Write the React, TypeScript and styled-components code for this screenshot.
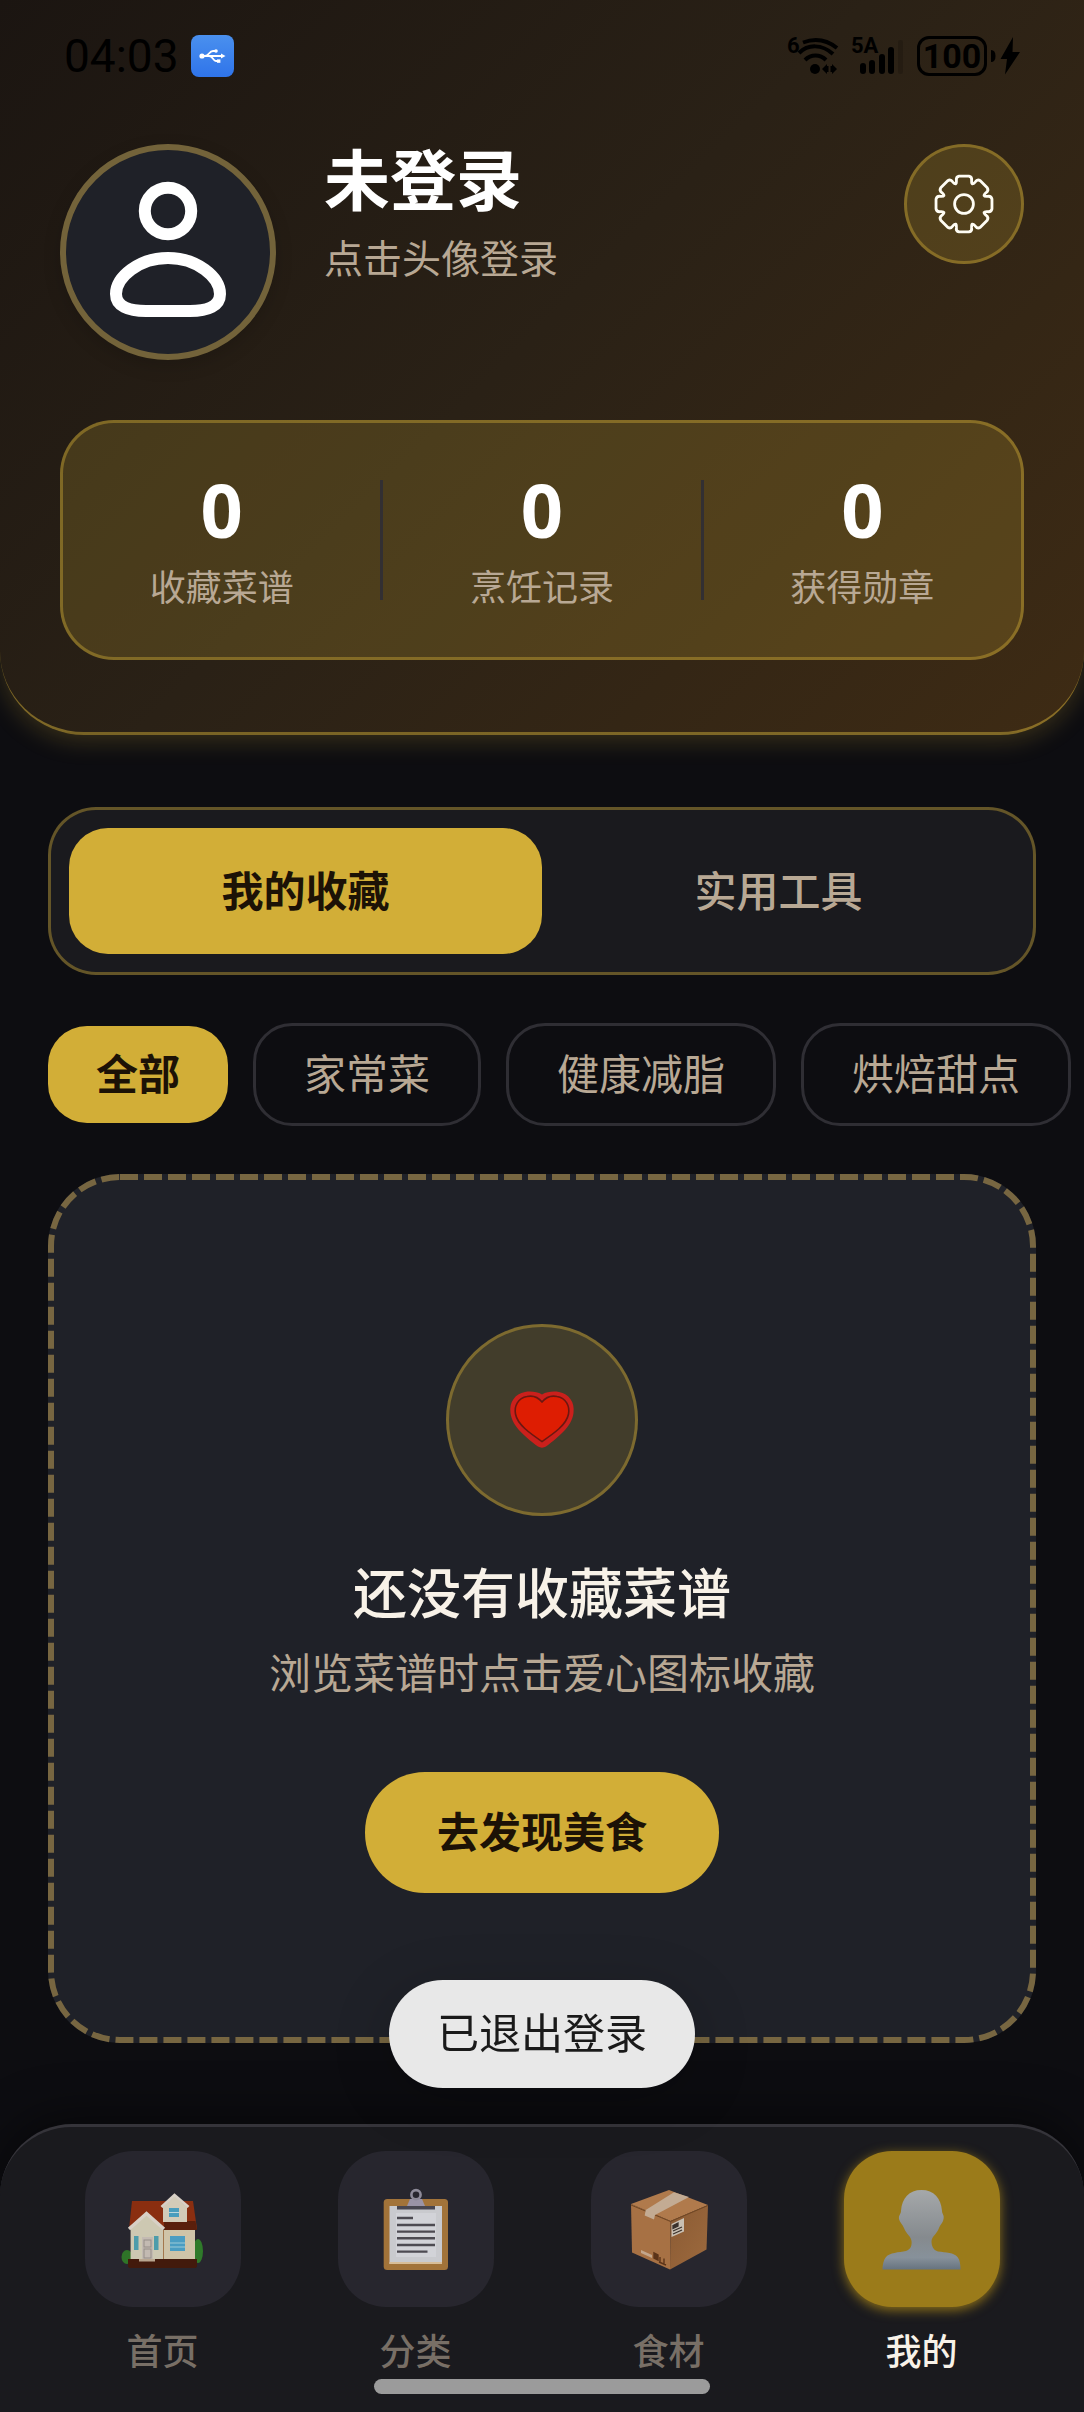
import React, { useState } from 'react';
import styled, { createGlobalStyle, css } from 'styled-components';

const color = {
  page: '#0d0d11',
  surface: '#1a1a1e',
  card: '#1f2128',
  tile: '#27262e',
  line: '#2f2e34',
  gold: '#d2ae37',
  goldDim: '#9b7b1a',
  goldWash: 'rgba(212, 175, 55, 0.2)',
  goldLine: 'rgba(212, 175, 55, 0.4)',
  text: '#ffffff',
  textWarm: '#f8f2e8',
  textSoft: '#b8a894',
  textFaint: '#786f66',
  ink: '#1c1206',
};

const GlobalStyle = createGlobalStyle`
  *, *::before, *::after { box-sizing: border-box; }
  body {
    margin: 0;
    background: ${color.page};
    color: ${color.text};
    font-family: "Noto Sans CJK SC", "Noto Sans", sans-serif;
  }
  h1, h2, p, dl, dd { margin: 0; }
  button { font: inherit; border: 0; padding: 0; cursor: pointer; }
`;

const Page = styled.div`
  display: flex;
  flex-direction: column;
  min-height: 100vh;
`;

/* ---------- header ---------- */

const Header = styled.header`
  padding: 0 60px 72px;
  border-bottom: 3px solid rgba(212, 175, 55, 0.5);
  border-radius: 0 0 84px 84px;
  background: linear-gradient(135deg, #1b1511 0%, #2a2116 48%, #3e2b14 100%);
  box-shadow: 0 6px 24px rgba(212, 175, 55, 0.22);
`;

const StatusBar = styled.div`
  display: flex;
  align-items: center;
  justify-content: space-between;
  height: 112px;
  margin-bottom: 32px;
  padding: 0 4px;
  color: #000;
  font-family: Roboto, "Noto Sans", sans-serif;
`;

const StatusGroup = styled.div<{ $gap: number }>`
  display: flex;
  align-items: center;
  gap: ${(p) => p.$gap}px;
`;

const Clock = styled.time`
  font-size: 46px;
  font-weight: 400;
  line-height: 48px;
`;

const Signal = styled.span<{ $width: number }>`
  position: relative;
  display: block;
  width: ${(p) => p.$width}px;
  height: 42px;

  svg { display: block; }
`;

const SignalTag = styled.span`
  position: absolute;
  top: 0;
  left: 0;
  font-size: 22px;
  font-weight: 700;
  line-height: 22px;
`;

const Battery = styled.span`
  display: grid;
  place-items: center;
  width: 70px;
  height: 40px;
  border: 3px solid #000;
  border-radius: 12px;
  font-size: 34px;
  font-weight: 700;
  line-height: 34px;
`;

const Profile = styled.section`
  display: flex;
  align-items: flex-start;
  gap: 48px;
`;

const Avatar = styled.button`
  flex: none;
  width: 216px;
  height: 216px;
  border: 6px solid #73633a;
  border-radius: 50%;
  background: ${color.card};
  box-shadow: 0 6px 18px rgba(0, 0, 0, 0.15);

  svg { display: block; }
`;

const Identity = styled.div`
  flex: 1;
  display: flex;
  flex-direction: column;
  gap: 24px;
`;

const Name = styled.h1`
  font-size: 66px;
  font-weight: 700;
  line-height: 64px;
`;

const Hint = styled.p`
  color: ${color.textSoft};
  font-size: 39px;
  line-height: 48px;
`;

const SettingsButton = styled.button`
  display: grid;
  place-items: center;
  flex: none;
  width: 120px;
  height: 120px;
  border: 3px solid ${color.goldLine};
  border-radius: 50%;
  background: ${color.goldWash};
`;

const Stats = styled.dl`
  display: flex;
  align-items: center;
  margin-top: 60px;
  padding: 48px 0;
  border: 3px solid ${color.goldLine};
  border-radius: 54px;
  background: ${color.goldWash};
`;

const Stat = styled.div`
  flex: 1;
  display: flex;
  flex-direction: column-reverse;
  align-items: center;
  gap: 12px;
`;

const StatLabel = styled.dt`
  color: ${color.textSoft};
  font-size: 36px;
  line-height: 48px;
`;

const StatValue = styled.dd`
  font-family: "Noto Sans", sans-serif;
  font-size: 74px;
  font-weight: 700;
  line-height: 78px;
`;

const StatDivider = styled.div`
  width: 3px;
  height: 120px;
  background: #322f32;
`;

/* ---------- content ---------- */

const Content = styled.main`
  flex: 1;
  display: flex;
  flex-direction: column;
  gap: 48px;
  padding: 72px 48px 81px;
`;

const Tabs = styled.div`
  display: flex;
  padding: 18px;
  border: 3px solid ${color.goldLine};
  border-radius: 48px;
  background: ${color.surface};
`;

const Tab = styled.button<{ $active: boolean }>`
  flex: 1;
  height: 126px;
  padding-bottom: 6px;
  border-radius: 39px;
  background: ${(p) => (p.$active ? color.gold : 'transparent')};
  color: ${(p) => (p.$active ? color.ink : color.textSoft)};
  font-size: 42px;
  font-weight: ${(p) => (p.$active ? 700 : 500)};
  line-height: 49px;
`;

const Chips = styled.div`
  display: flex;
  align-items: center;
  gap: 25px;
  margin-right: -48px;
  overflow-x: auto;
  scrollbar-width: none;
`;

const Chip = styled.button<{ $active: boolean }>`
  flex: none;
  padding: 21px 48px 27px;
  border-radius: 39px;
  font-size: 42px;
  line-height: 49px;
  ${(p) =>
    p.$active
      ? css`
          background: ${color.gold};
          color: ${color.ink};
          font-weight: 700;
        `
      : css`
          border: 3px solid ${color.line};
          background: transparent;
          color: ${color.textSoft};
        `}
`;

const EmptyCard = styled.section`
  position: relative;
  display: flex;
  flex-direction: column;
  align-items: center;
  padding: 150px 48px;
  border-radius: 72px;
  background: ${color.card};
  text-align: center;
`;

const DashedOutline = styled.svg`
  position: absolute;
  inset: 0;
  width: 100%;
  height: 100%;
  pointer-events: none;

  rect {
    x: 3px;
    y: 3px;
    width: calc(100% - 6px);
    height: calc(100% - 6px);
    fill: none;
    stroke: #776641;
    stroke-width: 6px;
    stroke-dasharray: 18 6;
  }
`;

const HeartBadge = styled.div`
  display: grid;
  place-items: center;
  width: 192px;
  height: 192px;
  border: 3px solid ${color.goldLine};
  border-radius: 50%;
  background: ${color.goldWash};
`;

const EmptyTitle = styled.h2`
  margin-top: 42px;
  color: ${color.textWarm};
  font-size: 54px;
  font-weight: 500;
  line-height: 66px;
`;

const EmptyText = styled.p`
  margin-top: 22px;
  color: ${color.textSoft};
  font-size: 42px;
  line-height: 49px;
`;

const PrimaryButton = styled.button`
  margin-top: 77px;
  padding: 33px 72px 39px;
  border-radius: 60px;
  background: ${color.gold};
  color: ${color.ink};
  font-size: 42px;
  font-weight: 700;
  line-height: 49px;
`;

/* ---------- overlays and navigation ---------- */

const ToastLayer = styled.div`
  position: fixed;
  right: 0;
  bottom: 324px;
  left: 0;
  z-index: 2;
  display: flex;
  justify-content: center;
  pointer-events: none;
`;

const Toast = styled.div`
  padding: 27px 48px 33px;
  border-radius: 54px;
  background: #e8e8e8;
  box-shadow: 0 12px 60px rgba(0, 0, 0, 0.2);
  color: #1a1a1a;
  font-size: 42px;
  line-height: 48px;
`;

const BottomBar = styled.footer`
  position: sticky;
  bottom: 0;
  display: flex;
  flex-direction: column;
  align-items: center;
  padding-bottom: 18px;
  border-top: 3px solid #35343a;
  border-radius: 72px 72px 0 0;
  background: ${color.surface};
  box-shadow: 0 -6px 48px rgba(0, 0, 0, 0.5);
`;

const Nav = styled.nav`
  display: flex;
  align-self: stretch;
  padding: 24px 36px 0;
`;

const NavLink = styled.a<{ $active: boolean }>`
  flex: 1;
  display: flex;
  flex-direction: column;
  align-items: center;
  gap: 18px;
  color: ${(p) => (p.$active ? color.textWarm : color.textFaint)};
  font-size: 36px;
  font-weight: 500;
  line-height: 48px;
  text-decoration: none;
`;

const NavTile = styled.span<{ $active: boolean }>`
  display: grid;
  place-items: center;
  width: 156px;
  height: 156px;
  border-radius: 48px;
  background: ${(p) => (p.$active ? color.goldDim : color.tile)};
  box-shadow: ${(p) => (p.$active ? '0 3px 12px rgba(155, 123, 26, 0.9)' : 'none')};
`;

const HomeIndicator = styled.div`
  width: 336px;
  height: 15px;
  margin-top: 6px;
  border-radius: 8px;
  background: #9b9b9b;
`;

/* ---------- icons ---------- */

const UsbIcon = () => (
  <svg width="43" height="42" viewBox="0 0 43 42" aria-hidden="true">
    <defs>
      <linearGradient id="usb" x1="0" y1="0" x2="0" y2="1">
        <stop offset="0" stopColor="#4a90ee" />
        <stop offset="1" stopColor="#2f74ea" />
      </linearGradient>
    </defs>
    <rect width="43" height="42" rx="8" fill="url(#usb)" />
    <g fill="none" stroke="#fff" strokeWidth="1.8">
      <path d="M10 21H32M14 21c4 0 4-5 8-5h3M18 21c4 0 4 5 7 5h3" />
    </g>
    <circle cx="11" cy="21" r="2.6" fill="#fff" />
    <circle cx="25" cy="16" r="1.8" fill="#fff" />
    <rect x="26" y="24.4" width="3.4" height="3.4" fill="#fff" />
    <path d="M30 18.4l4.5 2.6-4.5 2.6z" fill="#fff" />
  </svg>
);

const WifiIcon = () => (
  <svg width="52" height="42" viewBox="0 0 52 42" aria-hidden="true">
    <g fill="none" stroke="#000" strokeWidth="4">
      <path d="M16 7.5C28 3 40 5 50 13" />
      <path d="M12 18C21 9 35 9 46 19" />
      <path d="M18 25C24 19 33 19 39 25" />
    </g>
    <circle cx="28" cy="34" r="5" />
    <path d="M40 29v10l-5-5zM45 29v10l5-5z" />
    <path d="M40 31h1.500v6h-1.500zM43.500 31h1.500v6h-1.500z" />
  </svg>
);

const BarsIcon = () => (
  <svg width="54" height="42" viewBox="0 0 54 42" aria-hidden="true">
    <rect x="9" y="28" width="6" height="11" rx="3" />
    <rect x="18" y="25" width="6" height="14" rx="3" />
    <rect x="28" y="19" width="6" height="20" rx="3" />
    <rect x="37" y="12" width="6" height="27" rx="3" />
    <rect x="47" y="5" width="5" height="34" rx="2" fillOpacity="0.15" />
  </svg>
);

const ChargeIcon = () => (
  <svg width="30" height="42" viewBox="0 0 30 42" aria-hidden="true">
    <path d="M1 15c3 0 4.500 2 4.500 6s-1.500 6-4.500 6z" />
    <path d="M23 2L10.500 24H17l-2 15.500L30 17h-7.500z" />
  </svg>
);

const PersonIcon = () => (
  <svg width="204" height="204" viewBox="66 150 204 204" fill="none" stroke="#fff" strokeWidth="12" aria-hidden="true">
    <ellipse cx="168" cy="211" rx="23.2" ry="23.2" />
    <path d="M168 258C197 258 220 277 220 294C220 306 208 311 190 311H146C128 311 116 306 116 294C116 277 139 258 168 258Z" />
  </svg>
);

const polar = (deg: number, r: number) => {
  const a = (deg * Math.PI) / 180;
  return `${(30 + r * Math.sin(a)).toFixed(2)} ${(30 - r * Math.cos(a)).toFixed(2)}`;
};

const gearPath =
  `M${polar(-10, 28.4)}` +
  Array.from({ length: 8 }, (_, i) => i * 45)
    .map(
      (a) =>
        `L${polar(a + 10, 28.4)}Q${polar(a + 17, 28.4)} ${polar(a + 18, 24.6)}` +
        `Q${polar(a + 22.5, 19)} ${polar(a + 27, 24.6)}Q${polar(a + 28, 28.4)} ${polar(a + 35, 28.4)}`
    )
    .join('') +
  'Z';

const GearIcon = () => (
  <svg width="60" height="60" viewBox="0 0 60 60" fill="none" stroke="#fffdf4" strokeWidth="2.8" aria-hidden="true">
    <path d={gearPath} strokeLinejoin="round" />
    <circle cx="30" cy="30" r="9.4" />
  </svg>
);

const HeartIcon = () => (
  <svg width="66" height="60" viewBox="0 0 66 60" aria-hidden="true">
    <path d="M33 4.500C38 1.500 45 1 50 2C60 4 66 12 64.500 23C63 37 48 48 37 56.500C34.500 58 31.500 58 29 56.500C18 48 3 37 1.500 23C0 12 6 4 16 2C21 1 28 1.500 33 4.500Z" fill="#cb201c" />
    <path d="M33 12C37 7 43 5.500 48 6.500C57 8 61 16 59.500 24C57.500 35 44 44 33 51.500C22 44 8.500 35 6.500 24C5 16 9 8 18 6.500C23 5.500 29 7 33 12Z" fill="#de1d02" stroke="#6d1710" strokeWidth="1.6" />
  </svg>
);

const HouseIcon = () => (
  <svg width="84" height="84" viewBox="0 0 84 84" aria-hidden="true">
    <ellipse cx="6" cy="70" rx="5.500" ry="7" fill="#2f7428" />
    <ellipse cx="77" cy="64" rx="5" ry="12" fill="#2f7a2a" />
    <path d="M7 72H76V79Q76 81 73 81H10Q7 81 7 79Z" fill="#421a0c" />
    <path d="M11 14H72L76 42H8Z" fill="#8a2e10" />
    <path d="M43 34H74.500L76 43H43Z" fill="#5a1f0c" />
    <rect x="42" y="43" width="32" height="29" fill="#cfc4a8" />
    <path d="M9.600 41L25.500 26L42 41V72H9.600Z" fill="#cdc8b2" />
    <path d="M8 42L25.500 26.500L43 42" fill="none" stroke="#d8d0c6" strokeWidth="3.4" />
    <path d="M42 20L53.500 9L66 20V35H42Z" fill="#d3cbb8" />
    <path d="M40.500 20L53.500 8L67.500 20" fill="none" stroke="#d8d0c6" strokeWidth="2.8" />
    <rect x="48" y="21" width="10" height="9" fill="#4a9dbd" />
    <path d="M48 25.500H58" stroke="#bcd6dc" strokeWidth="1" />
    <rect x="21" y="50" width="11" height="23" fill="#c3bab2" />
    <rect x="23" y="53" width="7" height="7" fill="none" stroke="#958d88" strokeWidth="1" />
    <rect x="23" y="62" width="7" height="9" fill="none" stroke="#958d88" strokeWidth="1" />
    <rect x="18" y="72" width="16" height="2.500" fill="#b9a690" />
    <rect x="13" y="49" width="4.500" height="14" fill="#4c9cab" />
    <rect x="33" y="49" width="4.500" height="14" fill="#4c9cab" />
    <rect x="49" y="49" width="15" height="15" fill="#4a9dc2" />
    <path d="M49 56H64M49 60H64" stroke="#9ccbd8" strokeWidth="1" />
    <path d="M42.500 43V72" stroke="#a3784e" strokeWidth="1" />
  </svg>
);

const ClipboardIcon = () => (
  <svg width="84" height="84" viewBox="0 0 84 84" aria-hidden="true">
    <rect x="9.700" y="12" width="64.300" height="71" rx="3.500" fill="#a27339" />
    <rect x="15.500" y="19" width="52.500" height="58" fill="#c9cace" />
    <rect x="22" y="26" width="40" height="44" fill="#d2d3d8" />
    <path d="M15.500 75H68V77H15.500Z" fill="#d8bd97" />
    <path d="M36 12H48L51 19H33Z" fill="#9a93a6" />
    <rect x="23" y="19" width="38" height="3.500" fill="#484650" />
    <circle cx="42" cy="7.700" r="4.600" fill="none" stroke="#8d8a98" strokeWidth="2.600" />
    <path d="M23 31H39M23 38H61M23 44.600H61M23 51.300H61M23 58H61M23 64.600H53.500" stroke="#4d4b52" strokeWidth="2.400" />
  </svg>
);

const BoxIcon = () => (
  <svg width="84" height="84" viewBox="0 0 84 84" aria-hidden="true">
    <defs>
      <linearGradient id="boxRight" x1="0" y1="0" x2="1" y2="1">
        <stop offset="0" stopColor="#8a5a33" />
        <stop offset="1" stopColor="#9d6a3e" />
      </linearGradient>
    </defs>
    <path d="M4 17L42 3L81 18L43.500 34Z" fill="#b07a4c" />
    <path d="M4 17L43.500 34L43 82.500L5 65.500Z" fill="#a77144" />
    <path d="M43.500 34L81 18L79.500 62.500L43 82.500Z" fill="url(#boxRight)" />
    <path d="M4 18L43.500 34.500L81 18.500" fill="none" stroke="#714622" strokeWidth="1" />
    <path d="M47 5.300L62 10L28 28L27 32.500L17.700 28.500L18.700 23Z" fill="#c3ab93" />
    <path d="M44.500 37L57 31V44.500L44.500 50Z" fill="#c9c0b3" />
    <path d="M46 38.500L51 36V39L46 41.500ZM46 44L55 40M46 47L55 43" fill="#3b322c" stroke="#3b322c" strokeWidth="1.300" />
    <path d="M14 63L25 68V71L14 66Z" fill="#c3a68b" />
    <path d="M27 66L31 68V73L27 71ZM33 70V75M37 71.500V77M32 75L39 78" fill="#5c3419" stroke="#5c3419" strokeWidth="1.400" />
  </svg>
);

const BustIcon = () => (
  <svg width="84" height="84" viewBox="0 0 84 84" aria-hidden="true">
    <defs>
      <linearGradient id="bust" x1="0" y1="0" x2="0" y2="1">
        <stop offset="0" stopColor="#a5a8aa" />
        <stop offset="0.600" stopColor="#858a8e" />
        <stop offset="0.850" stopColor="#87919a" />
        <stop offset="1" stopColor="#66737f" />
      </linearGradient>
    </defs>
    <path
      d="M41.500 3C54 3 61 11 62 24C62 27 64.500 28 63.500 32C63 36 60.500 37 59 41C57 47 52 49 51.500 54C51.500 59 53 63 58 64.500C66 65.500 74 65.500 77.500 70C80 73 80.500 78 80.500 82.500H2.500C2.500 78 3.500 73 6 70C9.500 65.500 19 65.500 26 64C31 62.500 32 58 31.500 54C31 49 26 47 24 41C22.500 37 20 36 19 32C18.500 28 21 27 21 24C22 11 29 3 41.500 3Z"
      fill="url(#bust)"
    />
  </svg>
);

/* ---------- data ---------- */

const stats = [
  { label: '收藏菜谱', value: 0 },
  { label: '烹饪记录', value: 0 },
  { label: '获得勋章', value: 0 },
];
const tabs = ['我的收藏', '实用工具'];
const categories = ['全部', '家常菜', '健康减脂', '烘焙甜点'];
const navItems = [
  { label: '首页', href: '#home', Icon: HouseIcon },
  { label: '分类', href: '#category', Icon: ClipboardIcon },
  { label: '食材', href: '#food', Icon: BoxIcon },
  { label: '我的', href: '#mine', Icon: BustIcon },
];

export default function App() {
  const [tab, setTab] = useState(tabs[0]);
  const [category, setCategory] = useState(categories[0]);
  const current = '我的';

  return (
    <Page>
      <GlobalStyle />
      <Header>
        <StatusBar>
          <StatusGroup $gap={12}>
            <Clock>04:03</Clock>
            <UsbIcon />
          </StatusGroup>
          <StatusGroup $gap={12}>
            <Signal $width={52}>
              <SignalTag>6</SignalTag>
              <WifiIcon />
            </Signal>
            <Signal $width={54}>
              <SignalTag>5A</SignalTag>
              <BarsIcon />
            </Signal>
            <StatusGroup $gap={3}>
              <Battery>100</Battery>
              <ChargeIcon />
            </StatusGroup>
          </StatusGroup>
        </StatusBar>

        <Profile>
          <Avatar type="button" aria-label="登录">
            <PersonIcon />
          </Avatar>
          <Identity>
            <Name>未登录</Name>
            <Hint>点击头像登录</Hint>
          </Identity>
          <SettingsButton type="button" aria-label="设置">
            <GearIcon />
          </SettingsButton>
        </Profile>

        <Stats>
          {stats.map((s, i) => (
            <React.Fragment key={s.label}>
              {i > 0 && <StatDivider />}
              <Stat>
                <StatLabel>{s.label}</StatLabel>
                <StatValue>{s.value}</StatValue>
              </Stat>
            </React.Fragment>
          ))}
        </Stats>
      </Header>

      <Content>
        <Tabs role="tablist">
          {tabs.map((t) => (
            <Tab key={t} type="button" role="tab" aria-selected={t === tab} $active={t === tab} onClick={() => setTab(t)}>
              {t}
            </Tab>
          ))}
        </Tabs>

        <Chips>
          {categories.map((c) => (
            <Chip key={c} type="button" aria-pressed={c === category} $active={c === category} onClick={() => setCategory(c)}>
              {c}
            </Chip>
          ))}
        </Chips>

        <EmptyCard>
          <DashedOutline aria-hidden="true">
            <rect rx="69" />
          </DashedOutline>
          <HeartBadge>
            <HeartIcon />
          </HeartBadge>
          <EmptyTitle>还没有收藏菜谱</EmptyTitle>
          <EmptyText>浏览菜谱时点击爱心图标收藏</EmptyText>
          <PrimaryButton type="button">去发现美食</PrimaryButton>
        </EmptyCard>
      </Content>

      <ToastLayer>
        <Toast role="status">已退出登录</Toast>
      </ToastLayer>

      <BottomBar>
        <Nav>
          {navItems.map(({ label, href, Icon }) => (
            <NavLink key={label} href={href} $active={label === current} aria-current={label === current ? 'page' : undefined}>
              <NavTile $active={label === current}>
                <Icon />
              </NavTile>
              {label}
            </NavLink>
          ))}
        </Nav>
        <HomeIndicator />
      </BottomBar>
    </Page>
  );
}
